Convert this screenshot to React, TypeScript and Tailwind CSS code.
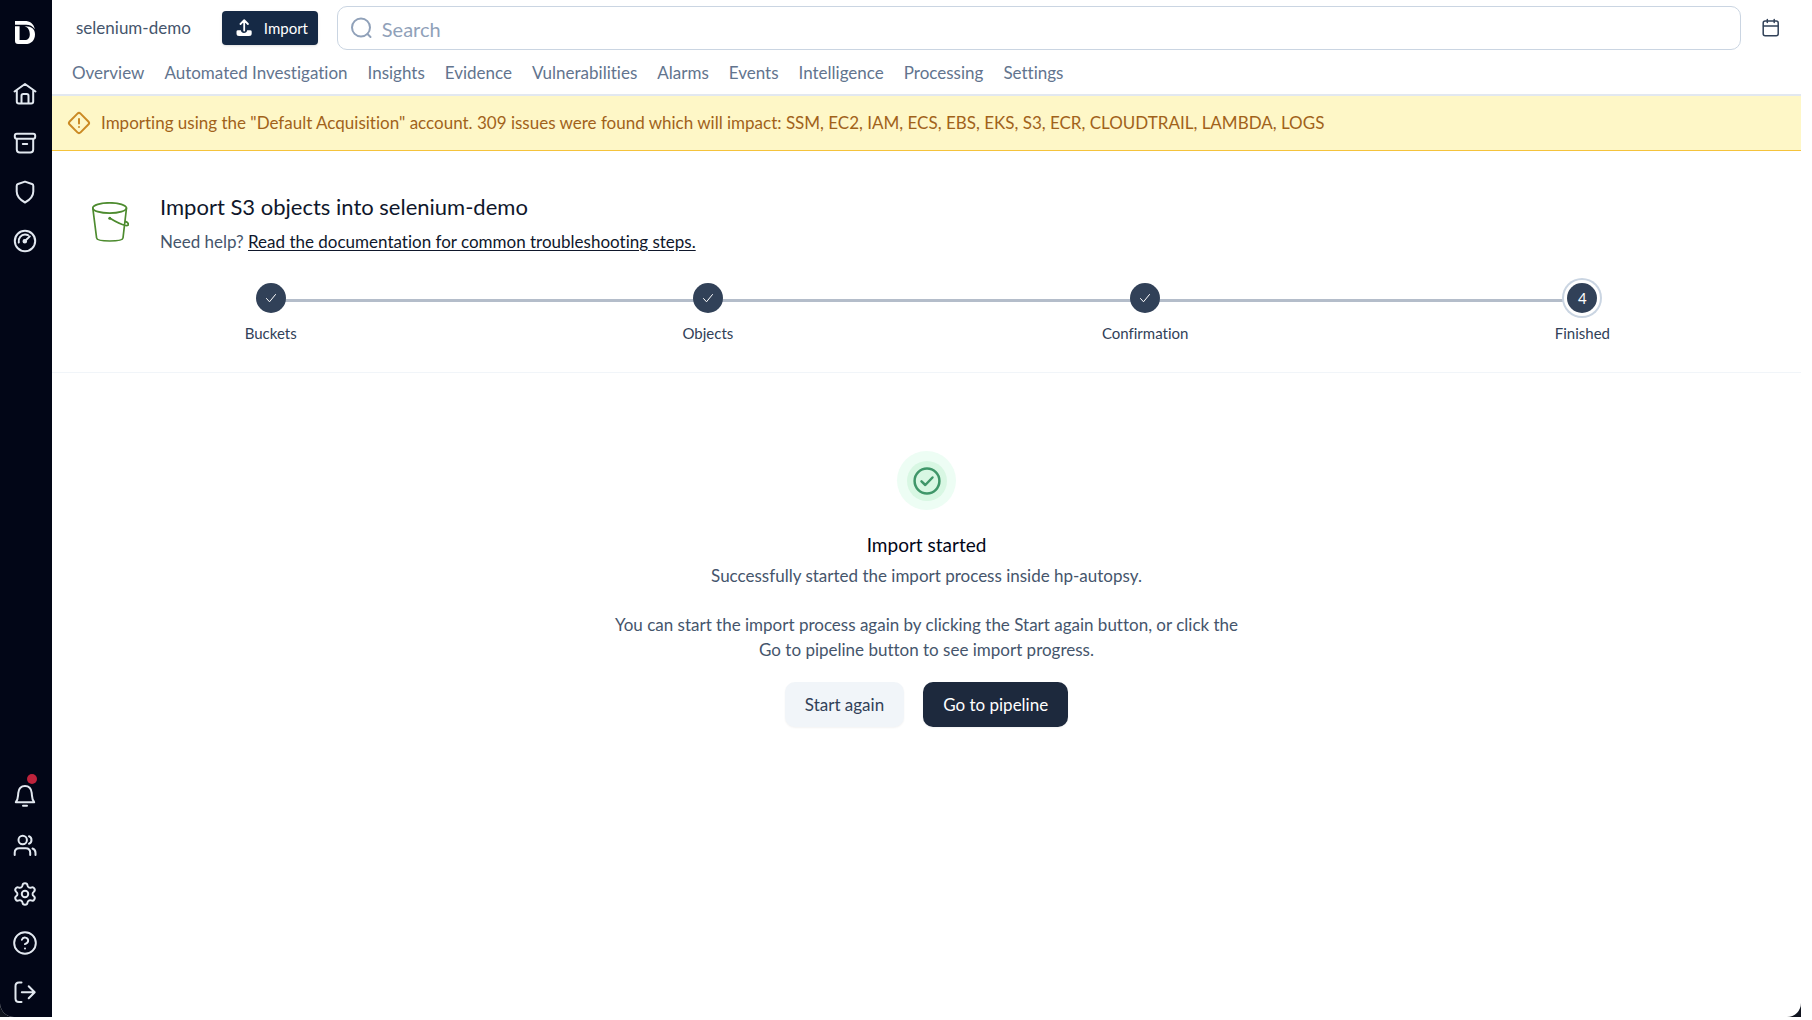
import type { ReactNode } from "react";
import { CircleQuestionMark, Settings } from "lucide-react";

const tabs = [
  "Overview",
  "Automated Investigation",
  "Insights",
  "Evidence",
  "Vulnerabilities",
  "Alarms",
  "Events",
  "Intelligence",
  "Processing",
  "Settings",
];

const steps = ["Buckets", "Objects", "Confirmation", "Finished"];
const currentStep = 3;

function Glyph({ children }: { children: ReactNode }) {
  return (
    <svg
      className="size-[26px]"
      viewBox="0 0 26 26"
      fill="none"
      stroke="currentColor"
      strokeWidth="2"
      strokeLinecap="round"
      strokeLinejoin="round"
      aria-hidden="true"
    >
      {children}
    </svg>
  );
}

function Logo() {
  return (
    <svg className="h-[23px] w-5" viewBox="0 0 20 23" fill="currentColor" aria-hidden="true">
      <path d="M0 0h9.500C15 0 18.800 2.600 19.800 8.200C17.500 5.200 15 3.800 11 3.800H0Z" />
      <path
        fillRule="evenodd"
        d="M0 5.300H10.500C16.500 5.300 20 8.300 20 13.200C20 19.300 16.500 23 10 23H3Q0 23 0 20ZM4.600 5.300V19.100H9.800C13 19.100 14.800 17 14.800 13.300C14.800 10 13.500 6.300 9.500 5.300H4.600Z"
      />
    </svg>
  );
}

const topLinks = [
  {
    label: "Home",
    icon: (
      <Glyph>
        <path d="M2.500 10.500L13 3l10.500 7.500M4.800 9.500V20.500q0 2 2 2H19.200q2 0 2-2V9.500M9.500 22V14.800q0-1.800 1.800-1.800h3.400q1.800 0 1.800 1.800V22" />
      </Glyph>
    ),
  },
  {
    label: "Archive",
    icon: (
      <Glyph>
        <rect x="2.800" y="3.800" width="20.400" height="5" rx="2" />
        <path d="M4.800 9V19.500q0 3 3 3H18.200q3 0 3-3V9M10.800 14h4.400" />
      </Glyph>
    ),
  },
  {
    label: "Security",
    icon: (
      <Glyph>
        <path d="M13 2.600L20 5q1.300.5 1.300 1.900V12.500C21.300 17.500 18 20.800 13 23.500C8 20.800 4.700 17.500 4.700 12.500V6.900Q4.700 5.500 6 5Z" />
      </Glyph>
    ),
  },
  {
    label: "Performance",
    icon: (
      <Glyph>
        <circle cx="13" cy="13" r="10.200" />
        <path d="M6.800 14.500C6 10 9.200 6.600 13 6.600q1.800 0 3 .6M13.500 12.500L17.800 8.400" />
        <circle cx="12.800" cy="13.200" r="1.300" fill="currentColor" />
      </Glyph>
    ),
  },
];

const bottomLinks = [
  {
    label: "Notifications",
    icon: (
      <Glyph>
        <path d="M3.800 19.200C6.500 16 5.800 13.500 6.300 9.800C6.800 5.400 9.500 3 13 3s6.200 2.400 6.700 6.800C20.200 13.500 19.500 16 22.200 19.200ZM11 22.800h4" />
      </Glyph>
    ),
  },
  {
    label: "Users",
    icon: (
      <Glyph>
        <circle cx="10.700" cy="8" r="4.200" />
        <path d="M2.700 23V20.800q0-4.500 4.500-4.500h6.500q4.500 0 4.500 4.500V23M17 4.200c3.300 1 3.300 6.600 0 7.600M20.500 16.500q3 1 3 4.500V23" />
      </Glyph>
    ),
  },
  { label: "Settings", icon: <Settings className="size-[26px]" strokeWidth={1.8} /> },
  { label: "Help", icon: <CircleQuestionMark className="size-[26px]" strokeWidth={1.8} /> },
  {
    label: "Log out",
    icon: (
      <Glyph>
        <path d="M9.500 3.500H7q-3.500 0-3.500 3.500V19.500q0 3.500 3.500 3.500H9.500M9.800 13.200H22.500M16.700 7.200L22.700 13.200L16.700 19.200" />
      </Glyph>
    ),
  },
];

function Sidebar() {
  return (
    <aside className="flex w-[52px] shrink-0 flex-col justify-between bg-[#020617] pt-[21px] pb-3 text-slate-200">
      <nav aria-label="Main" className="flex flex-col gap-[23px] pl-3">
        <a href="#" aria-label="Dashboard" className="mb-[14px] block pl-[3px] text-white">
          <Logo />
        </a>
        {topLinks.map((link) => (
          <a key={link.label} href="#" aria-label={link.label} className="block">
            {link.icon}
          </a>
        ))}
      </nav>
      <nav aria-label="Account" className="flex flex-col gap-[23px] pl-3">
        {bottomLinks.map((link) => (
          <a key={link.label} href="#" aria-label={link.label} className="relative block">
            {link.icon}
            {link.label === "Notifications" && (
              <span className="absolute -top-[9px] left-[15px] size-[10px] rounded-full bg-[#be233c]" />
            )}
          </a>
        ))}
      </nav>
    </aside>
  );
}

function Header() {
  return (
    <header className="border-b-2 border-slate-200">
      <div className="flex items-center pt-[6px] pr-5">
        <span className="pl-6 text-[17px] text-slate-600">selenium-demo</span>
        <button
          type="button"
          className="ml-[31px] flex h-[34px] w-24 shrink-0 items-center gap-3 rounded bg-[#152945] pl-[14px] text-[15px] text-white shadow-sm"
        >
          <svg className="h-[18px] w-4" viewBox="0 0 16 18" fill="none" aria-hidden="true">
            <path
              d="M0.500 12.500q0-1.200 1.500-1.200H4.800c.4 2 1.500 2.600 3.200 2.600s2.800-.6 3.200-2.600H14q1.700 0 1.700 1.200V14.500q0 2.500-2.700 2.500H3Q.5 17 .5 14.500Z"
              fill="currentColor"
            />
            <path
              d="M8.200 11.500V2M4.500 5L8.200 1.200L11.900 5"
              stroke="currentColor"
              strokeWidth="1.800"
              strokeLinecap="round"
              strokeLinejoin="round"
            />
          </svg>
          Import
        </button>
        <label className="ml-[19px] flex h-11 flex-1 items-center gap-[10px] rounded-[10px] border border-slate-300 px-3">
          <svg
            className="size-[22px] shrink-0 text-slate-400"
            viewBox="0 0 22 22"
            fill="none"
            stroke="currentColor"
            strokeWidth="2"
            strokeLinecap="round"
            aria-hidden="true"
          >
            <circle cx="11" cy="10.500" r="9" />
            <path d="M17.500 17L20.500 20" />
          </svg>
          <input
            type="search"
            placeholder="Search"
            aria-label="Search"
            className="w-full bg-transparent pt-px text-xl text-slate-700 outline-none placeholder:text-slate-400"
          />
        </label>
        <button type="button" aria-label="Date range" className="ml-5 shrink-0 text-slate-700">
          <svg
            className="size-5"
            viewBox="0 0 20 20"
            fill="none"
            stroke="currentColor"
            strokeWidth="1.500"
            strokeLinecap="round"
            aria-hidden="true"
          >
            <rect x="2.200" y="3" width="15" height="14.800" rx="2" />
            <path d="M2.500 8H17M6.300 1.500V4.500M13.200 1.500V4.500" />
          </svg>
        </button>
      </div>
      <nav aria-label="Project" className="flex h-11 items-center gap-5 pt-[2px] pl-5 text-[17px] text-slate-500">
        {tabs.map((tab) => (
          <a key={tab} href="#" className="whitespace-nowrap">
            {tab}
          </a>
        ))}
      </nav>
    </header>
  );
}

function IssueBanner() {
  return (
    <div
      role="alert"
      className="flex h-[55px] items-center gap-[10px] border-b border-[#f5c33b] bg-[#fef7c7] pl-[15px] text-[17px] text-[#a1621a]"
    >
      <svg
        className="size-6 shrink-0 text-[#cb8a24]"
        viewBox="0 0 24 24"
        fill="none"
        stroke="currentColor"
        strokeWidth="2"
        strokeLinecap="round"
        aria-hidden="true"
      >
        <rect x="4.300" y="4.300" width="15.400" height="15.400" rx="2.200" transform="rotate(45 12 12)" />
        <path d="M12 8V12.500M12 16V16.100" />
      </svg>
      <p>
        Importing using the "Default Acquisition" account. 309 issues were found which will impact: SSM, EC2, IAM, ECS,
        EBS, EKS, S3, ECR, CLOUDTRAIL, LAMBDA, LOGS
      </p>
    </div>
  );
}

function BucketIcon() {
  return (
    <svg
      className="h-10 w-[37px] shrink-0"
      viewBox="0 0 37 40"
      fill="none"
      stroke="#4d8b2f"
      strokeWidth="1.700"
      strokeLinecap="round"
      aria-hidden="true"
    >
      <ellipse cx="17.600" cy="6" rx="16.800" ry="5.200" />
      <path d="M.8 6L4.600 36C5 40 30.500 40 31 36L34.500 6M18 16.300C24 20 30 23 34 23.500C37.500 24 36.800 20.800 33.800 19.600" />
      <circle cx="17.800" cy="16.300" r="1.500" fill="#4d8b2f" stroke="none" />
    </svg>
  );
}

function Stepper() {
  return (
    <ol className="grid grid-cols-4 text-[15px] text-slate-700">
      {steps.map((step, index) => (
        <li key={step} className="relative flex flex-col items-center gap-[10px]">
          {index > 0 && <span className="absolute top-4 right-1/2 h-[3px] w-full bg-[#b4bdca]" />}
          {index === currentStep ? (
            <span className="relative flex size-[30px] items-center justify-center rounded-full bg-slate-700 text-white ring-2 ring-slate-300 ring-offset-3 ring-offset-white">
              {index + 1}
            </span>
          ) : (
            <span className="relative z-10 flex size-[30px] items-center justify-center rounded-full bg-slate-700 text-white">
              <svg className="size-3" viewBox="0 0 12 12" fill="none" stroke="currentColor" aria-hidden="true">
                <path d="M1.500 6.500L4.500 9.800L10.500 2.500" strokeLinecap="round" strokeLinejoin="round" />
              </svg>
            </span>
          )}
          <span className="leading-5">{step}</span>
        </li>
      ))}
    </ol>
  );
}

function ImportResult() {
  return (
    <section className="flex flex-col items-center pt-[78px] text-center text-[17px] leading-[25px] text-slate-600">
      <div className="flex size-[59px] items-center justify-center rounded-full bg-[#edfdf4]">
        <div className="flex size-10 items-center justify-center rounded-full bg-[#d8f7e3]">
          <svg
            className="size-7"
            viewBox="0 0 28 28"
            fill="none"
            stroke="#3f9669"
            strokeWidth="2.500"
            strokeLinecap="round"
            strokeLinejoin="round"
            aria-hidden="true"
          >
            <circle cx="14" cy="14" r="12.400" />
            <path d="M8.500 14.300L12.300 18L19.500 10.500" />
          </svg>
        </div>
      </div>
      <h2 className="mt-[22px] text-[19px] text-slate-950">Import started</h2>
      <p className="mt-[6px]">Successfully started the import process inside hp-autopsy.</p>
      <p className="mt-6 max-w-[660px]">
        You can start the import process again by clicking the Start again button, or click the
        <br />
        Go to pipeline button to see import progress.
      </p>
      <div className="mt-5 flex gap-[19px]">
        <button type="button" className="h-[45px] rounded-[10px] bg-slate-100 px-5 text-slate-700 shadow-xs">
          Start again
        </button>
        <button type="button" className="h-[45px] rounded-[10px] bg-slate-800 px-5 text-white shadow-xs">
          Go to pipeline
        </button>
      </div>
    </section>
  );
}

export default function App() {
  return (
    <div className="flex h-screen flex-col bg-white pr-[11px] pb-[3px] font-['Lato',sans-serif] [font-variant-ligatures:none]">
      <div className="flex flex-1 bg-[#10151f]">
        <div className="flex flex-1 overflow-hidden rounded-b-[14px] bg-white">
          <Sidebar />
          <main className="min-w-0 flex-1">
            <Header />
            <IssueBanner />
            <div className="border-b border-slate-100 pt-[42px] pb-[29px]">
              <div className="mb-[29px] flex items-start gap-[31px] pl-10">
                <div className="pt-[9px]">
                  <BucketIcon />
                </div>
                <div>
                  <h1 className="text-[22px] leading-7 text-slate-900">Import S3 objects into selenium-demo</h1>
                  <p className="mt-2 text-[17px] leading-[25px] text-slate-600">
                    Need help?{" "}
                    <a href="#" className="text-slate-900 underline underline-offset-2">
                      Read the documentation for common troubleshooting steps.
                    </a>
                  </p>
                </div>
              </div>
              <Stepper />
            </div>
            <ImportResult />
          </main>
        </div>
      </div>
    </div>
  );
}
